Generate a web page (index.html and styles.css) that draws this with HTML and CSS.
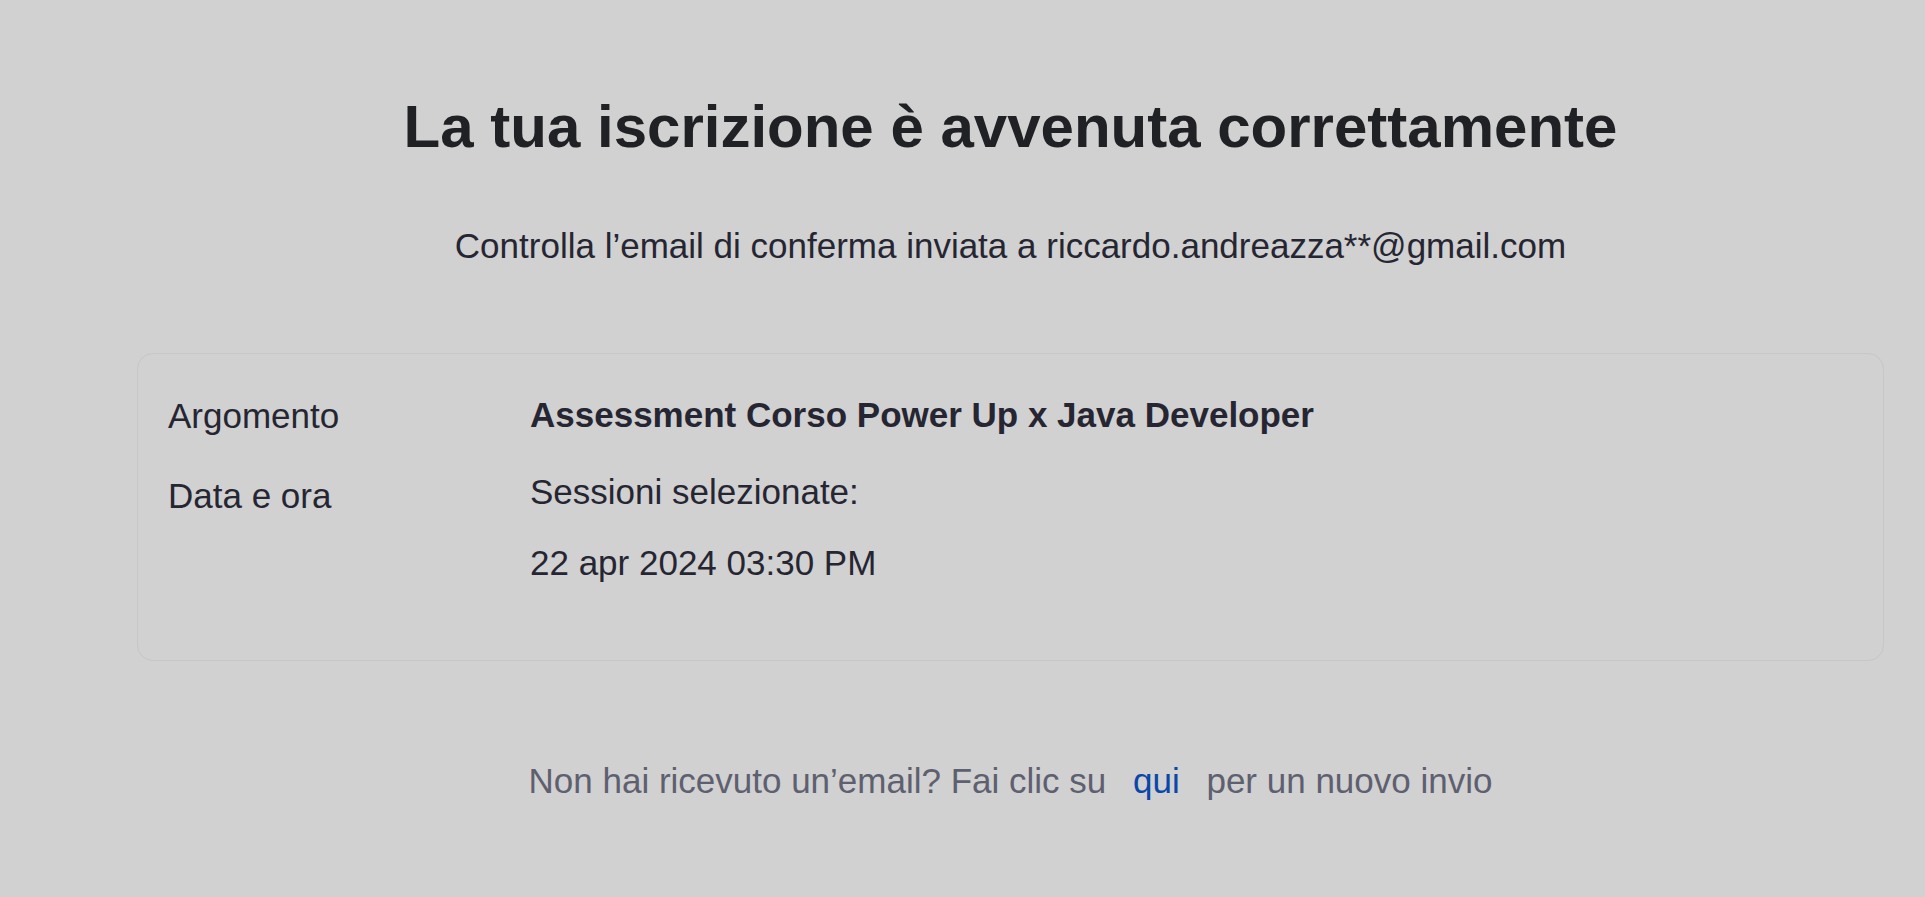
FILE: index.html
```html
<!DOCTYPE html>
<html lang="it">
<head>
<meta charset="utf-8">
<title>Iscrizione confermata</title>
<link rel="stylesheet" href="styles.css">
</head>
<body>
<main class="page">
  <h1 class="title">La tua iscrizione è avvenuta correttamente</h1>
  <p class="subtitle">Controlla l’email di conferma inviata a riccardo.andreazza**@gmail.com</p>
  <section class="card">
    <div class="row">
      <div class="label">Argomento</div>
      <div class="value value-strong">Assessment Corso Power Up x Java Developer</div>
    </div>
    <div class="row">
      <div class="label label-date">Data e ora</div>
      <div class="value">
        <p class="line">Sessioni selezionate:</p>
        <p class="line line-date">22 apr 2024 03:30 PM</p>
      </div>
    </div>
  </section>
  <p class="footer">Non hai ricevuto un’email? Fai clic su <a class="link" href="#">qui</a> per un nuovo invio</p>
</main>
</body>
</html>
```
FILE: styles.css
```css
html, body {
  margin: 0;
  padding: 0;
  background: #d1d1d1;
}
body {
  font-family: "Liberation Sans", Arial, sans-serif;
  color: #262633;
}
.page {
  margin: 0 41px 0 137px;
  padding-top: 91px;
  display: flex;
  flex-direction: column;
}
.title {
  margin: 0;
  font-size: 60px;
  line-height: 72px;
  font-weight: 700;
  text-align: center;
  color: #202124;
}
.subtitle {
  margin: 57px 0 0;
  font-size: 35px;
  line-height: 52.5px;
  text-align: center;
  color: #262633;
}
.card {
  margin-top: 80px;
  border: 1px solid #c6c6cb;
  border-radius: 16px;
  padding: 35px 30px 71px 30px;
  display: flex;
  flex-direction: column;
  gap: 24px;
}
.row {
  display: grid;
  grid-template-columns: 362px 1fr;
  font-size: 35px;
  line-height: 52.5px;
}
.label {
  color: #262633;
  padding-top: 1px;
}
.label-date {
  padding-top: 4px;
}
.value-strong {
  font-weight: 700;
}
.line {
  margin: 0;
}
.line-date {
  margin-top: 18px;
}
.footer {
  margin: 94px 0 0;
  font-size: 35px;
  line-height: 52.5px;
  text-align: center;
  color: #5e6070;
}
.link {
  color: #0a47a8;
  text-decoration: none;
  margin: 0 17px;
}
```
